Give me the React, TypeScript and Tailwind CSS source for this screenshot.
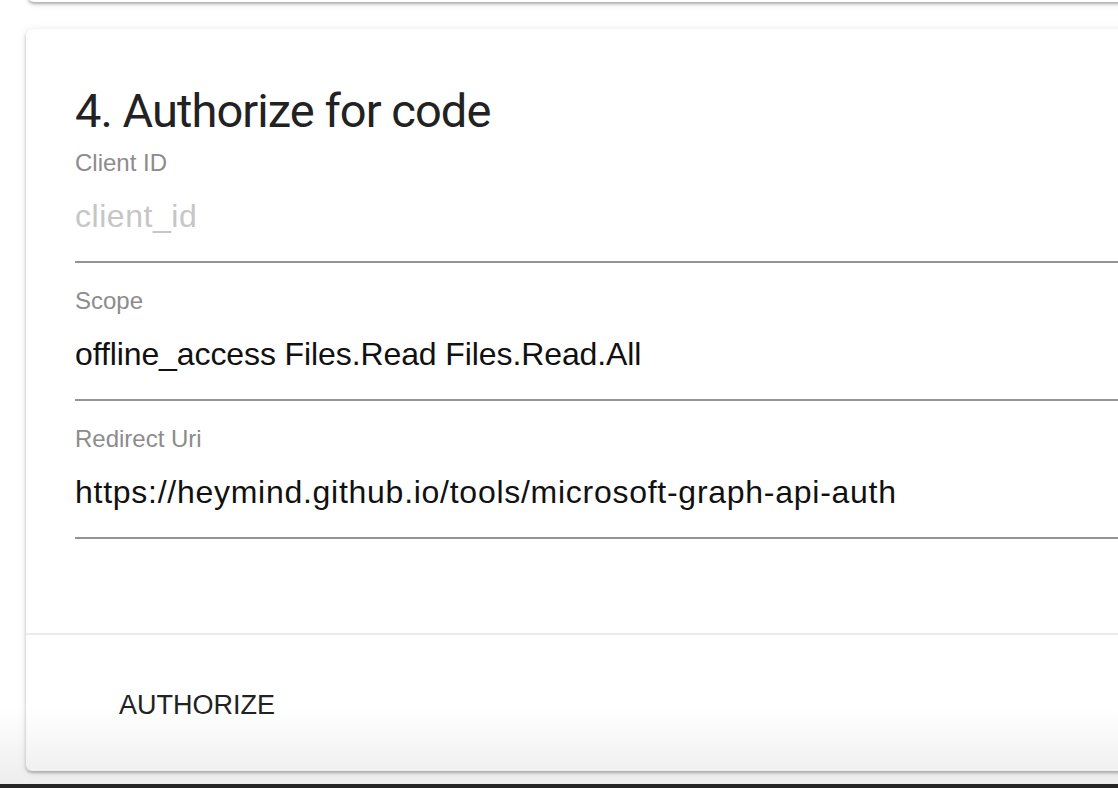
import React from "react";

const sans = { fontFamily: '"Liberation Sans", Arial, sans-serif' };

function Field({
  label,
  value,
  placeholder,
  track,
}: {
  label: string;
  value?: string;
  placeholder?: string;
  track: string;
}) {
  return (
    <div className="flex flex-col">
      <div className="h-[28px] text-[24px] leading-[28px] text-[#8c8c8c] font-['Liberation_Sans',Arial,sans-serif]">
        {label}
      </div>
      <div
        className={
          "mt-[19px] h-[40px] text-[32px] leading-[40px] font-['Liberation_Sans',Arial,sans-serif] whitespace-nowrap " +
          track +
          " " +
          (value ? "text-[#111111]" : "text-[#c6c6c6]")
        }
      >
        {value ?? placeholder}
      </div>
      <div className="mt-[25px] h-[2px] bg-[#949494]" />
    </div>
  );
}

export default function App() {
  return (
    <div className="relative flex h-[788px] w-[1118px] flex-col overflow-hidden bg-white" style={sans}>
      {/* previous card bottom edge */}
      <div className="-mt-[8px] ml-[28px] h-[10px] w-[1110px] shrink-0 rounded-b-[6px] bg-white shadow-[0_2px_3px_rgba(0,0,0,0.28),0_1px_8px_rgba(0,0,0,0.1)]" />

      {/* card */}
      <div className="ml-[26px] mt-[27px] flex h-[742px] w-[1110px] shrink-0 flex-col rounded-[6px] bg-white shadow-[0_2px_3px_rgba(0,0,0,0.25),0_1px_8px_rgba(0,0,0,0.1)]">
        <div className="flex h-[604px] flex-col pl-[49px] pt-[54px]">
          <div className="h-[56px] font-['Roboto',Arial,sans-serif] text-[47px] leading-[56px] tracking-[-0.95px] text-[#222222]">
            4. Authorize for code
          </div>
          <div className="mt-[10px] flex flex-col gap-[24px]">
            <Field label="Client ID" placeholder="client_id" track="tracking-[0.55px]" />
            <Field label="Scope" value="offline_access Files.Read Files.Read.All" track="tracking-[-0.1px]" />
            <Field
              label="Redirect Uri"
              value="https://heymind.github.io/tools/microsoft-graph-api-auth"
              track="tracking-[0.73px]"
            />
          </div>
        </div>
        <div className="h-[2px] bg-[#ebebeb]" />
        <div className="flex flex-1 items-start pl-[93px] pt-[54px]">
          <button className="h-[32px] text-[27px] leading-[32px] tracking-[0px] text-[#222222] font-['Liberation_Sans',Arial,sans-serif]">
            AUTHORIZE
          </button>
        </div>
      </div>

      {/* bottom fade */}
      <div className="pointer-events-none absolute left-0 top-[708px] h-[76px] w-full bg-gradient-to-b from-transparent to-black/[0.07]" />

      {/* dark strip */}
      <div className="mt-auto h-[4px] w-full shrink-0 bg-[#262626]" />
    </div>
  );
}
